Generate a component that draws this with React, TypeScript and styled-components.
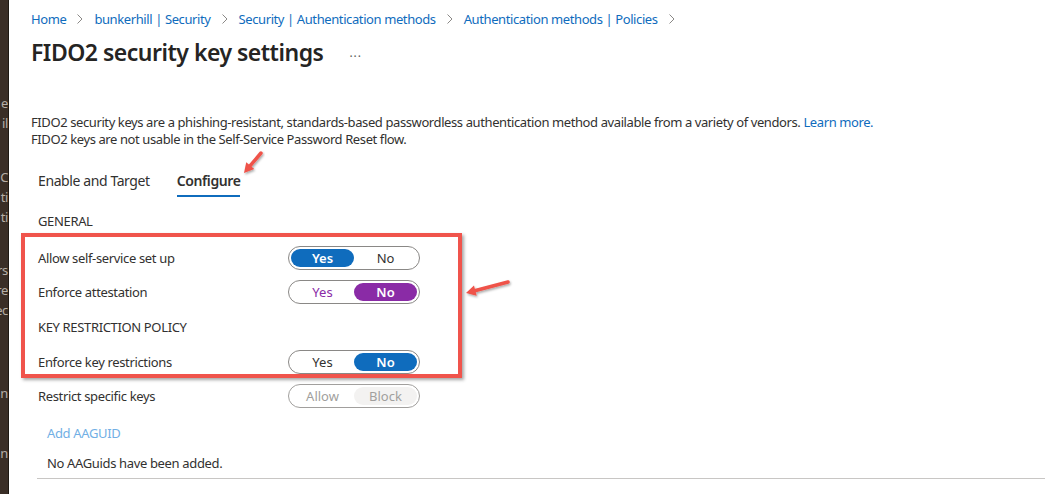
import React from "react";
import styled, { createGlobalStyle } from "styled-components";

const GlobalStyle = createGlobalStyle`
  html, body {
    margin: 0;
    padding: 0;
    background: #ffffff;
  }
  body {
    font-family: "Noto Sans", "Open Sans", Arial, sans-serif;
    color: #323130;
    letter-spacing: -0.35px;
  }
`;

const Page = styled.div`
  position: relative;
  display: flex;
  flex-direction: row;
  width: 1063px;
  height: 494px;
  overflow: hidden;
`;

const LeftStrip = styled.div`
  width: 8px;
  flex-shrink: 0;
  background: #3a2e26;
  border-right: 1px solid #1e1812;
  position: relative;
  overflow: hidden;
`;

const StripLetter = styled.span<{ $top: number }>`
  position: absolute;
  top: ${(p) => p.$top}px;
  right: 0;
  font-size: 13px;
  line-height: 14px;
  color: #b6aea6;
  white-space: nowrap;
`;

const Main = styled.div`
  flex: 1;
  padding-left: 22px;
  display: flex;
  flex-direction: column;
`;

const Breadcrumb = styled.nav`
  display: flex;
  align-items: center;
  gap: 11px;
  padding-top: 9px;
  height: 20px;
  font-size: 13px;
  letter-spacing: -0.4px;
`;

const Crumb = styled.span`
  color: #0f6cbd;
  white-space: nowrap;
`;

const TitleRow = styled.div`
  display: flex;
  align-items: center;
  margin-top: 7px;
  height: 32px;
`;

const Title = styled.h1`
  margin: 0;
  font-size: 23px;
  font-weight: 600;
  letter-spacing: -0.5px;
  color: #252423;
`;

const More = styled.span`
  margin-left: 26px;
  font-size: 12px;
  color: #605e5c;
  letter-spacing: 1px;
`;

const Description = styled.p`
  margin: 46px 0 0;
  font-size: 13px;
  line-height: 17px;
  letter-spacing: -0.4px;
  color: #323130;
`;

const Link = styled.a`
  color: #0f6cbd;
  text-decoration: none;
`;

const Content = styled.div`
  padding-left: 7px;
  display: flex;
  flex-direction: column;
`;

const Tabs = styled.div`
  display: flex;
  gap: 27px;
  margin-top: 20px;
`;

const Tab = styled.div<{ $active?: boolean }>`
  font-size: 14px;
  line-height: 20px;
  letter-spacing: -0.4px;
  padding: 3px 0 4px;
  font-weight: ${(p) => (p.$active ? 600 : 400)};
  color: #323130;
  border-bottom: 2px solid ${(p) => (p.$active ? "#0f6cbd" : "transparent")};
`;

const SectionTitle = styled.div<{ $height: number }>`
  display: flex;
  align-items: center;
  height: ${(p) => p.$height}px;
  font-size: 13px;
  color: #323130;
`;

const Settings = styled.div`
  position: relative;
  margin-top: 10px;
  display: flex;
  flex-direction: column;
`;

const Row = styled.div`
  display: flex;
  align-items: center;
  height: 34px;
`;

const Label = styled.div`
  width: 250px;
  font-size: 13px;
  color: #323130;
`;

const Toggle = styled.div<{ $disabled?: boolean }>`
  display: grid;
  grid-template-columns: 1fr 1fr;
  width: 132px;
  height: 24px;
  box-sizing: border-box;
  padding: 2px;
  border: 1px solid ${(p) => (p.$disabled ? "#a19f9d" : "#8a8886")};
  border-radius: 12px;
`;

const Option = styled.div<{ $bg?: string; $fg: string; $bold?: boolean }>`
  display: flex;
  align-items: center;
  justify-content: center;
  border-radius: 10px;
  font-size: 13px;
  letter-spacing: 0;
  background: ${(p) => p.$bg || "transparent"};
  color: ${(p) => p.$fg};
  font-weight: ${(p) => (p.$bold ? 600 : 400)};
`;

const AddLink = styled.div`
  display: flex;
  align-items: center;
  height: 40px;
  padding-left: 9px;
  font-size: 13px;
  color: #71afe5;
`;

const EmptyText = styled.div`
  display: flex;
  align-items: center;
  height: 20px;
  padding-left: 9px;
  font-size: 13px;
  color: #323130;
`;

const Divider = styled.div`
  margin-top: 5px;
  margin-left: -1px;
  width: 1008px;
  border-top: 1px solid #c8c6c4;
`;

const Highlight = styled.div`
  position: absolute;
  left: -17px;
  top: -8px;
  width: 441px;
  height: 145px;
  box-sizing: border-box;
  border: 4px solid #f0544c;
  box-shadow: 2px 2px 3px rgba(60, 60, 60, 0.45);
  pointer-events: none;
`;

const ArrowLayer = styled.svg`
  position: absolute;
  left: 0;
  top: 0;
  pointer-events: none;
`;

const Chevron = () => (
  <svg width="6" height="10" viewBox="0 0 6 10">
    <path d="M0.5 0.5 L5 5 L0.5 9.5" fill="none" stroke="#8a8886" strokeWidth="1" />
  </svg>
);

type Choice = { text: string; bg?: string; fg: string; bold?: boolean };

const SegToggle = ({ left, right, disabled }: { left: Choice; right: Choice; disabled?: boolean }) => (
  <Toggle $disabled={disabled}>
    <Option $bg={left.bg} $fg={left.fg} $bold={left.bold}>
      {left.text}
    </Option>
    <Option $bg={right.bg} $fg={right.fg} $bold={right.bold}>
      {right.text}
    </Option>
  </Toggle>
);

const BLUE = "#0f6cbd";
const PURPLE = "#8a2ba6";

const stripLetters: [number, string][] = [
  [96, "e"],
  [116, "il"],
  [170, "C"],
  [190, "ti"],
  [210, "ti"],
  [263, "rs"],
  [283, "re"],
  [303, "ec"],
  [386, "n"],
  [446, "n"],
];

function Arrow({ x1, y1, x2, y2 }: { x1: number; y1: number; x2: number; y2: number }) {
  const a = Math.atan2(y2 - y1, x2 - x1);
  const len = 11;
  const spread = 0.5;
  const p1 = [x2 - len * Math.cos(a - spread), y2 - len * Math.sin(a - spread)];
  const p2 = [x2 - len * Math.cos(a + spread), y2 - len * Math.sin(a + spread)];
  const bx = x2 - 7 * Math.cos(a);
  const by = y2 - 7 * Math.sin(a);
  return (
    <g filter="url(#shadow)">
      <line x1={x1} y1={y1} x2={bx} y2={by} stroke="#ef5249" strokeWidth="3.5" strokeLinecap="round" />
      <polygon points={`${x2},${y2} ${p1[0]},${p1[1]} ${p2[0]},${p2[1]}`} fill="#ef5249" />
    </g>
  );
}

export default function App() {
  return (
    <>
      <GlobalStyle />
      <Page>
        <LeftStrip>
          {stripLetters.map(([top, t], i) => (
            <StripLetter key={i} $top={top}>
              {t}
            </StripLetter>
          ))}
        </LeftStrip>
        <Main>
          <Breadcrumb>
            <Crumb>Home</Crumb>
            <Chevron />
            <Crumb>bunkerhill | Security</Crumb>
            <Chevron />
            <Crumb>Security | Authentication methods</Crumb>
            <Chevron />
            <Crumb>Authentication methods | Policies</Crumb>
            <Chevron />
          </Breadcrumb>
          <TitleRow>
            <Title>FIDO2 security key settings</Title>
            <More>...</More>
          </TitleRow>
          <Description>
            FIDO2 security keys are a phishing-resistant, standards-based passwordless authentication method available
            from a variety of vendors. <Link>Learn more.</Link>
            <br />
            FIDO2 keys are not usable in the Self-Service Password Reset flow.
          </Description>
          <Content>
            <Tabs>
              <Tab>Enable and Target</Tab>
              <Tab $active>Configure</Tab>
            </Tabs>
            <SectionTitle $height={20} style={{ marginTop: 14 }}>
              GENERAL
            </SectionTitle>
            <Settings>
              <Row>
                <Label>Allow self-service set up</Label>
                <SegToggle
                  left={{ text: "Yes", bg: BLUE, fg: "#ffffff", bold: true }}
                  right={{ text: "No", fg: "#323130" }}
                />
              </Row>
              <Row>
                <Label>Enforce attestation</Label>
                <SegToggle
                  left={{ text: "Yes", fg: PURPLE }}
                  right={{ text: "No", bg: PURPLE, fg: "#ffffff", bold: true }}
                />
              </Row>
              <SectionTitle $height={36}>KEY RESTRICTION POLICY</SectionTitle>
              <Row>
                <Label>Enforce key restrictions</Label>
                <SegToggle
                  left={{ text: "Yes", fg: "#323130" }}
                  right={{ text: "No", bg: BLUE, fg: "#ffffff", bold: true }}
                />
              </Row>
              <Highlight />
              <Row>
                <Label>Restrict specific keys</Label>
                <SegToggle
                  disabled
                  left={{ text: "Allow", fg: "#a19f9d" }}
                  right={{ text: "Block", bg: "#f3f2f1", fg: "#a19f9d" }}
                />
              </Row>
            </Settings>
            <AddLink>Add AAGUID</AddLink>
            <EmptyText>No AAGuids have been added.</EmptyText>
            <Divider />
          </Content>
        </Main>
        <ArrowLayer width="1063" height="494">
          <defs>
            <filter id="shadow" x="-20%" y="-20%" width="140%" height="140%">
              <feDropShadow dx="1" dy="1.5" stdDeviation="1" floodColor="#000" floodOpacity="0.35" />
            </filter>
          </defs>
          <Arrow x1={261} y1={153} x2={244} y2={173} />
          <Arrow x1={508} y1={282} x2={466} y2={293} />
        </ArrowLayer>
      </Page>
    </>
  );
}
